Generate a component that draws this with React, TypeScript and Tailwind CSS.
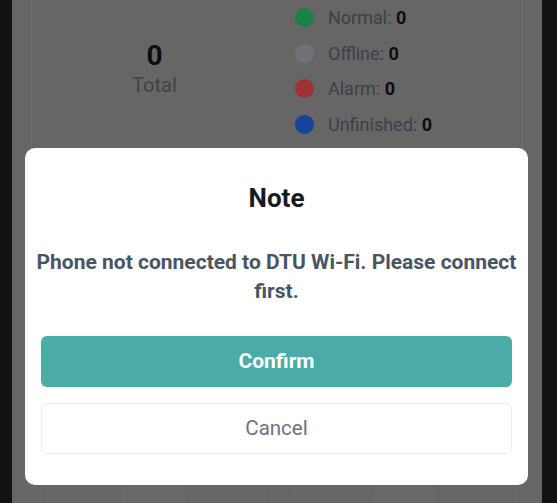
import React from "react";

const legend = [
  { label: "Normal", dot: "bg-[#1a8044]" },
  { label: "Offline", dot: "bg-[#707277]" },
  { label: "Alarm", dot: "bg-[#9f3232]" },
  { label: "Unfinished", dot: "bg-[#17439a]" },
];

const NoteModal: React.FC = () => {
  return (
    <div className="absolute left-[25px] top-[148px] w-[503px] rounded-[10px] bg-white px-4 pt-[34px] pb-[31px]">
      <h2 className="text-center text-[26px] leading-[32px] font-bold text-[#141a22]">Note</h2>
      <p className="-mx-2 mt-[34px] text-center text-[21px] leading-[29px] font-bold text-[#4a5563]">
        Phone not connected to DTU Wi-Fi. Please connect first.
      </p>
      <button className="mt-[30px] flex h-[51px] w-full items-center justify-center rounded-[6px] bg-[#4aaba7] text-[21px] font-bold text-white">
        Confirm
      </button>
      <button className="mt-4 flex h-[51px] w-full items-center justify-center rounded-[6px] border border-[#ececec] bg-white text-[20.5px] text-[#6c7480]">
        Cancel
      </button>
    </div>
  );
};

const App: React.FC = () => {
  return (
    <div
      className="relative flex h-[503px] w-[557px] overflow-hidden bg-[#121212]"
      style={{ fontFamily: "Roboto, 'Noto Sans', sans-serif" }}
    >
      <main className="ml-3 flex w-[530px] flex-col bg-[#666666]">
        <section className="h-[362px] px-[19px]">
          <div className="grid h-[350px] grid-cols-2 items-start border-x border-b border-[#6c6c6c]">
            <div className="flex h-[137px] flex-col items-center justify-center">
              <span className="text-[28px] leading-[32px] font-bold text-[#0d0d0d]">0</span>
              <span className="text-[20px] leading-[26px] text-[#3e434a]">Total</span>
            </div>
            <ul className="flex flex-col pl-[18px]">
              {legend.map((item) => (
                <li key={item.label} className="flex h-[35.5px] items-center gap-[14px]">
                  <span className={`h-[19px] w-[19px] rounded-full ${item.dot}`} />
                  <span className="text-[18px] text-[#3b4048]">
                    {item.label}: <b className="text-[#0d0d0d]">0</b>
                  </span>
                </li>
              ))}
            </ul>
          </div>
        </section>
        <div className="h-[11px] bg-[#606060]" />
        <section className="flex-1 pt-3 pl-[29px] pr-[25px]">
          <div className="grid h-full grid-cols-2 gap-[27px]">
            {[0, 1].map((i) => (
              <div key={i} className="flex flex-col items-center border-x border-t border-[#6b6b6b] pt-[103px]">
                <div className="h-[64px] w-[64px] rounded-full bg-[#696969]" />
              </div>
            ))}
          </div>
        </section>
      </main>
      <NoteModal />
    </div>
  );
};

export default App;
